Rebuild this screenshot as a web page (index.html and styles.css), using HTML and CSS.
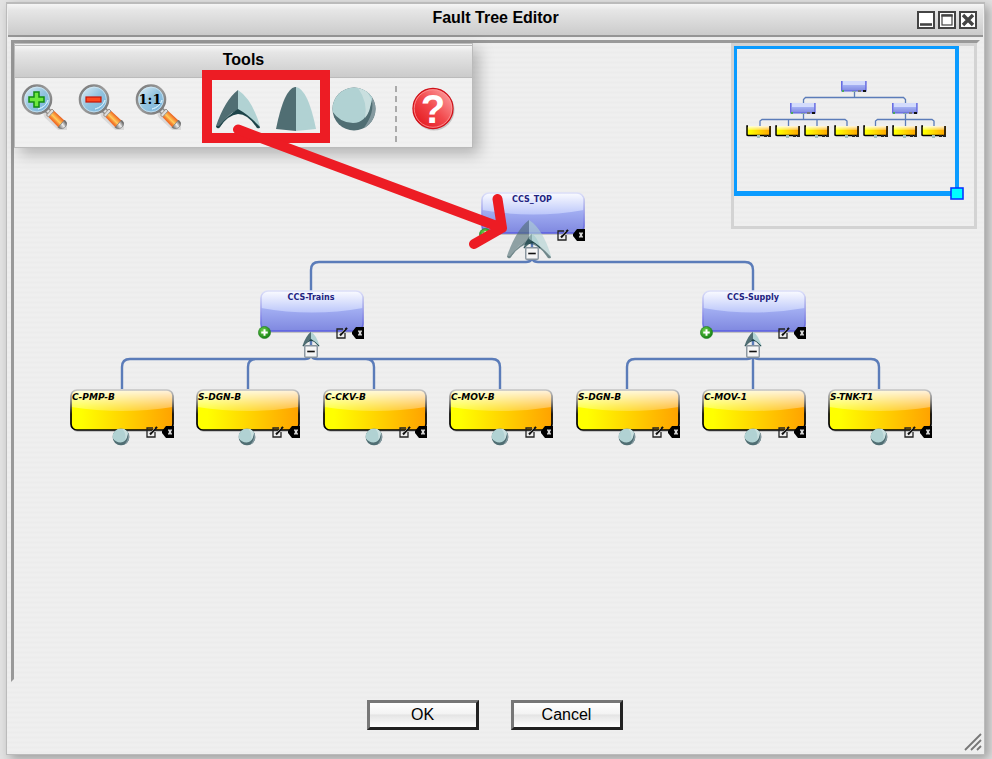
FILE: index.html
```html
<!DOCTYPE html>
<html lang="en">
<head>
<meta charset="utf-8">
<title>Fault Tree Editor</title>
<link rel="stylesheet" href="styles.css">
</head>
<body>
<svg class="defs" aria-hidden="true">
  <defs>
    <linearGradient id="blue" x1="0" y1="0" x2="0" y2="1"><stop offset="0" stop-color="#a6b2f4"/><stop offset=".45" stop-color="#a2aef2"/><stop offset="1" stop-color="#7f88e0"/></linearGradient>
    <linearGradient id="blueGloss" x1="0" y1="0" x2="0" y2="1"><stop offset="0" stop-color="#fafbff"/><stop offset="1" stop-color="#bcc7fa"/></linearGradient>
    <linearGradient id="blueEdge" x1="0" y1="0" x2="0" y2="1"><stop offset="0" stop-color="#dcdff8"/><stop offset="1" stop-color="#595de0"/></linearGradient>
    <linearGradient id="gold" x1="0" y1="0" x2="1" y2="0"><stop offset=".1" stop-color="#ffff00"/><stop offset="1" stop-color="#ffa200"/></linearGradient>
    <linearGradient id="goldGloss" x1="0" y1="0" x2="0" y2="1"><stop offset="0" stop-color="#fff" stop-opacity=".88"/><stop offset="1" stop-color="#fff" stop-opacity=".22"/></linearGradient>
    <linearGradient id="goldEdge" x1="0" y1="0" x2="0" y2="1"><stop offset="0" stop-color="#c4c4c4"/><stop offset=".25" stop-color="#888"/><stop offset=".6" stop-color="#000"/></linearGradient>
    <linearGradient id="lens" x1="0" y1="0" x2="1" y2="1"><stop offset="0" stop-color="#e5f2f9"/><stop offset=".5" stop-color="#92c3df"/><stop offset="1" stop-color="#74b1dc"/></linearGradient>
    <linearGradient id="rim" x1="0" y1="0" x2="1" y2="1"><stop offset="0" stop-color="#777"/><stop offset=".5" stop-color="#9d9d9d"/><stop offset="1" stop-color="#707070"/></linearGradient>
    <linearGradient id="grip" gradientUnits="userSpaceOnUse" x1="31" y1="37.500" x2="37.500" y2="31"><stop offset="0" stop-color="#ee5c1c"/><stop offset=".25" stop-color="#f4812e"/><stop offset=".5" stop-color="#ffcb5c"/><stop offset=".75" stop-color="#f9983c"/><stop offset="1" stop-color="#e9601f"/></linearGradient>
    <linearGradient id="metal" gradientUnits="userSpaceOnUse" x1="38" y1="43" x2="45" y2="38"><stop offset="0" stop-color="#777"/><stop offset=".5" stop-color="#eee"/><stop offset="1" stop-color="#555"/></linearGradient>
    <linearGradient id="help" x1="1" y1="0" x2="0" y2="1"><stop offset="0" stop-color="#ffb0b0"/><stop offset=".5" stop-color="#f24a4e"/><stop offset="1" stop-color="#e00b12"/></linearGradient>
    <radialGradient id="add" cx=".4" cy=".35" r=".7"><stop offset="0" stop-color="#6fd34f"/><stop offset="1" stop-color="#0d7a0d"/></radialGradient>
    <clipPath id="ballClip"><circle cx="22" cy="22" r="21.5"/></clipPath>

    <symbol id="box-blue" viewBox="0 0 104 43">
      <rect x="2" y="3" width="102" height="40" rx="6" fill="#aaa" opacity=".6"/>
      <rect x="1" y="1" width="102" height="40" rx="7" fill="url(#blue)"/>
      <path d="M1 8Q1 1 8 1H96Q103 1 103 8V18Q52 27 1 18Z" fill="url(#blueGloss)"/>
      <rect x="1" y="1" width="102" height="40" rx="7" fill="none" stroke="url(#blueEdge)" stroke-width="1.6"/>
    </symbol>
    <symbol id="box-gold" viewBox="0 0 104 43">
      <rect x="2" y="3" width="102" height="40" rx="6" fill="#999" opacity=".5"/>
      <rect x="1" y="1" width="102" height="40" rx="6" fill="url(#gold)"/>
      <path d="M1 7Q1 1 7 1H97Q103 1 103 7V18Q52 26 1 18Z" fill="url(#goldGloss)"/>
      <rect x="1" y="1" width="102" height="40" rx="6" fill="none" stroke="url(#goldEdge)" stroke-width="1.7"/>
    </symbol>
    <symbol id="magnifier" viewBox="0 0 46 46">
      <path d="M28 30L42 43" stroke="#666" stroke-width="11" opacity=".16" stroke-linecap="round"/>
      <path d="M25 25L30 30" stroke="#8c8c8c" stroke-width="6"/>
      <path d="M25 25L29 29" stroke="#ddd" stroke-width="3"/>
      <path d="M25.500 31L31 25L44 37L38 44Z" fill="url(#grip)"/>
      <path d="M25.500 31L31 25L33 27L27.500 33Z" fill="#ddd" stroke="#888" stroke-width=".8"/>
      <path d="M37 43.500L43.500 36Q47 38.500 45 42Q42 46.500 37 43.500Z" fill="url(#metal)" stroke="#777" stroke-width=".7"/>
      <circle cx="16" cy="15.500" r="14" fill="url(#lens)" stroke="url(#rim)" stroke-width="2.6"/>
      <circle cx="16" cy="15.500" r="12.4" fill="none" stroke="#d5e9f4" stroke-width=".7"/>
      <path d="M17 25Q25 23 27 16Q25 23 17 25Z" fill="#e8f6ff" stroke="#d3edf9"/>
    </symbol>
    <symbol id="gate-or" viewBox="0 0 46 42">
      <path d="M1 38Q10 12 23 2V22Q12 26 5 39Q3 42 1 38Z" fill="#506e73"/>
      <path d="M23 2Q37 11 45 38Q44 42 41 39Q34 27 23 22Z" fill="#b1d2d3"/>
      <path d="M23 21Q34 27 45 39Q45 41 42 40Q33 26 23 26Q13 27 5 39Q2 42 1 38L4 38Q13 27 23 21Z" fill="#1d4449"/>
    </symbol>
    <symbol id="gate-and" viewBox="0 0 42 46">
      <path d="M1 43Q9 3 20 1H21V45Z" fill="#506e73"/>
      <path d="M21 1Q33 3 41 43L21 45Z" fill="#b1d2d3"/>
    </symbol>
    <symbol id="ball" viewBox="-1 -1 46 46">
      <g clip-path="url(#ballClip)">
        <rect width="44" height="44" fill="#506e73"/>
        <path d="M39 10Q44 25 31 42H44V10Z" fill="#84999f"/>
        <path d="M0 24Q8 36 21 36T38 19Q41 12 40 9L30 0H0Z" fill="#b1d2d3"/>
        <path d="M26 1Q36 15 33 31Q39 24 39 12L35 4Z" fill="#c9dfdf"/>
      </g>
    </symbol>
    <symbol id="plus" viewBox="0 0 12 12">
      <circle cx="6" cy="6" r="5.6" fill="url(#add)" stroke="#238123" stroke-width=".6"/>
      <path d="M6 3V9M3 6H9" stroke="#fff" stroke-width="1.8"/>
    </symbol>
    <symbol id="edit" viewBox="0 0 12 12">
      <path d="M7 2H1V11H9V6" fill="none" stroke="#222" stroke-width="1.3"/>
      <path d="M4 8.500L11 .8" stroke="#111" stroke-width="2"/>
      <path d="M5 6L9 2" stroke="#ccc" stroke-width=".6"/>
    </symbol>
    <symbol id="remove" viewBox="0 0 12 12">
      <path d="M12 0V12H4L0 7V5L4 0Z" fill="#000"/>
      <path d="M6.500 3.500L9.500 8.500M9.500 3.500L6.500 8.500" stroke="#ddd" stroke-width="1.5"/>
    </symbol>
    <symbol id="minus" viewBox="0 0 13 12">
      <rect x=".7" y=".7" width="11.6" height="10.6" rx="1" fill="#f5f5f5" stroke="#87939d" stroke-width="1.3"/>
      <path d="M3 6H10" stroke="#111" stroke-width="1.5"/>
    </symbol>
    <symbol id="mini-blue" viewBox="0 0 26 13">
      <path d="M1 1H25V11H1Z" fill="url(#blue)"/>
      <path d="M2 1H24V5H2Z" fill="#d3dbfc"/>
      <path d="M.7 1V11H25V1" fill="none" stroke="#5a5ee0" stroke-width="1.2"/>
      <path d="M1 10H3V12H1Z" fill="#4ba95a"/><path d="M11 11H15V12H11Z" fill="#87aaa7"/><path d="M17 10H20V12H17Z" fill="#777"/><path d="M22 10H25V12H22Z" fill="#111"/>
    </symbol>
    <symbol id="mini-gold" viewBox="0 0 26 14">
      <path d="M1 1H25V11H1Z" fill="url(#gold)"/>
      <path d="M2 1H24V5H2Z" fill="url(#goldGloss)"/>
      <path d="M2 1H1V10L2 10.500H24V1" fill="none" stroke="#000" stroke-width="1.5"/>
      <path d="M11 10H14V13H11Z" fill="#9fbfbd"/><path d="M18 10H21V12H18ZM22 10H25V12H22Z" fill="#222"/>
    </symbol>
  </defs>
</svg>

<main class="window">
  <header class="titlebar">
    <h1 class="title">Fault Tree Editor</h1>
    <div class="window-buttons">
      <button class="wbtn" aria-label="Minimize"><svg viewBox="0 0 18 18"><rect x="1" y="1" width="16" height="16" fill="#fff" stroke="#444" stroke-width="2"/><path d="M3 13.500H15" stroke="#444" stroke-width="2.6"/></svg></button>
      <button class="wbtn" aria-label="Maximize"><svg viewBox="0 0 18 18"><rect x="1" y="1" width="16" height="16" fill="#fff" stroke="#444" stroke-width="2"/><rect x="4" y="4" width="10" height="10" fill="none" stroke="#444" stroke-width="1.2"/><path d="M3.400 4.500H14.600" stroke="#444" stroke-width="2.4"/></svg></button>
      <button class="wbtn" aria-label="Close"><svg viewBox="0 0 18 18"><rect x="1" y="1" width="16" height="16" fill="#fff" stroke="#444" stroke-width="2"/><path d="M4 4L14 14M14 4L4 14" stroke="#444" stroke-width="3.4"/></svg></button>
    </div>
  </header>

  <section class="canvas" aria-label="Fault tree">
    <svg class="layer" width="964" height="636" aria-hidden="true">
      <g transform="translate(-14 -43)" fill="none" stroke="#5b7cb9" stroke-width="2.4">
        <path d="M532 236V260M311 291V270Q311 262 319 262H526Q530 262 532 259Q534 262 538 262H745Q753 262 753 270V291"/>
        <path d="M311 334V356M122 389V367Q122 359 130 359H305Q309 359 311 356Q313 359 317 359H492Q500 359 500 367V389M248 389V367Q248 359 256 359M374 389V367Q374 359 366 359"/>
        <path d="M753 334V389M627 389V367Q627 359 635 359H747Q751 359 753 356Q755 359 759 359H871Q879 359 879 367V389"/>
      </g>
    </svg>

    <article class="node gate n-top">
      <svg class="box"><use href="#box-blue"/></svg><span class="label">CCS_TOP</span>
      <button class="badge add" aria-label="Add child"><svg><use href="#plus"/></svg></button>
      <svg class="gate-icon"><use href="#gate-or"/></svg>
      <svg class="gate-ghost"><use href="#gate-or"/></svg>
      <button class="badge collapse" aria-label="Collapse"><svg><use href="#minus"/></svg></button>
      <button class="badge edit" aria-label="Edit"><svg><use href="#edit"/></svg></button>
      <button class="badge remove" aria-label="Remove"><svg><use href="#remove"/></svg></button>
    </article>
    <article class="node gate n-trains">
      <svg class="box"><use href="#box-blue"/></svg><span class="label">CCS-Trains</span>
      <button class="badge add" aria-label="Add child"><svg><use href="#plus"/></svg></button>
      <svg class="gate-icon"><use href="#gate-or"/></svg>
      <button class="badge collapse" aria-label="Collapse"><svg><use href="#minus"/></svg></button>
      <button class="badge edit" aria-label="Edit"><svg><use href="#edit"/></svg></button>
      <button class="badge remove" aria-label="Remove"><svg><use href="#remove"/></svg></button>
    </article>
    <article class="node gate n-supply">
      <svg class="box"><use href="#box-blue"/></svg><span class="label">CCS-Supply</span>
      <button class="badge add" aria-label="Add child"><svg><use href="#plus"/></svg></button>
      <svg class="gate-icon"><use href="#gate-or"/></svg>
      <button class="badge collapse" aria-label="Collapse"><svg><use href="#minus"/></svg></button>
      <button class="badge edit" aria-label="Edit"><svg><use href="#edit"/></svg></button>
      <button class="badge remove" aria-label="Remove"><svg><use href="#remove"/></svg></button>
    </article>

    <article class="node leaf n-1"><svg class="box"><use href="#box-gold"/></svg><span class="label">C-PMP-B</span><svg class="event"><use href="#ball"/></svg><button class="badge edit" aria-label="Edit"><svg><use href="#edit"/></svg></button><button class="badge remove" aria-label="Remove"><svg><use href="#remove"/></svg></button></article>
    <article class="node leaf n-2"><svg class="box"><use href="#box-gold"/></svg><span class="label">S-DGN-B</span><svg class="event"><use href="#ball"/></svg><button class="badge edit" aria-label="Edit"><svg><use href="#edit"/></svg></button><button class="badge remove" aria-label="Remove"><svg><use href="#remove"/></svg></button></article>
    <article class="node leaf n-3"><svg class="box"><use href="#box-gold"/></svg><span class="label">C-CKV-B</span><svg class="event"><use href="#ball"/></svg><button class="badge edit" aria-label="Edit"><svg><use href="#edit"/></svg></button><button class="badge remove" aria-label="Remove"><svg><use href="#remove"/></svg></button></article>
    <article class="node leaf n-4"><svg class="box"><use href="#box-gold"/></svg><span class="label">C-MOV-B</span><svg class="event"><use href="#ball"/></svg><button class="badge edit" aria-label="Edit"><svg><use href="#edit"/></svg></button><button class="badge remove" aria-label="Remove"><svg><use href="#remove"/></svg></button></article>
    <article class="node leaf n-5"><svg class="box"><use href="#box-gold"/></svg><span class="label">S-DGN-B</span><svg class="event"><use href="#ball"/></svg><button class="badge edit" aria-label="Edit"><svg><use href="#edit"/></svg></button><button class="badge remove" aria-label="Remove"><svg><use href="#remove"/></svg></button></article>
    <article class="node leaf n-6"><svg class="box"><use href="#box-gold"/></svg><span class="label">C-MOV-1</span><svg class="event"><use href="#ball"/></svg><button class="badge edit" aria-label="Edit"><svg><use href="#edit"/></svg></button><button class="badge remove" aria-label="Remove"><svg><use href="#remove"/></svg></button></article>
    <article class="node leaf n-7"><svg class="box"><use href="#box-gold"/></svg><span class="label">S-TNK-T1</span><svg class="event"><use href="#ball"/></svg><button class="badge edit" aria-label="Edit"><svg><use href="#edit"/></svg></button><button class="badge remove" aria-label="Remove"><svg><use href="#remove"/></svg></button></article>

    <section class="tools">
      <h2 class="tools-title">Tools</h2>
      <div class="tools-row">
        <button class="tool zoom" aria-label="Zoom in"><svg viewBox="0 0 46 46"><use href="#magnifier"/><path d="M13 8H18V13H23V18H18V23H13V18H8V13H13Z" fill="#6de83e" stroke="#128a12" stroke-width="1.5"/></svg></button>
        <button class="tool zoom" aria-label="Zoom out"><svg viewBox="0 0 46 46"><use href="#magnifier"/><rect x="8" y="13" width="15" height="5" fill="#ff4a20" stroke="#c4160a" stroke-width="1.2"/></svg></button>
        <button class="tool zoom" aria-label="Actual size"><svg viewBox="0 0 46 46"><use href="#magnifier"/><text x="15" y="20" class="ratio">1:1</text></svg></button>
        <button class="tool gate-tool first-gate" aria-label="OR gate"><svg><use href="#gate-or"/></svg></button>
        <button class="tool gate-tool" aria-label="AND gate"><svg><use href="#gate-and"/></svg></button>
        <button class="tool gate-tool" aria-label="Basic event"><svg><use href="#ball"/></svg></button>
        <span class="divider"></span>
        <button class="tool help" aria-label="Help"><svg viewBox="0 0 46 46"><circle cx="24" cy="24" r="20.500" fill="#888" opacity=".4"/><circle cx="23" cy="22.500" r="20" fill="url(#help)" stroke="#cf1119" stroke-width="1.3"/><circle cx="23" cy="22.500" r="18.800" fill="none" stroke="#ff9a9a" stroke-width=".8"/><text x="23" y="37" class="question">?</text></svg></button>
      </div>
    </section>

    <aside class="overview" aria-label="Overview">
      <svg width="246" height="186" viewBox="731 43 246 186">
        <g fill="none" stroke="#5b7cb9" stroke-width="1.3">
          <path d="M854.500 92V97.500M803.500 103V99.500L805.500 97.500H903.500L905.500 99.500V103"/>
          <path d="M803.500 114V119.500M760 126V121L762 119.500H845L847 121V126M788.500 126V120M817 126V120"/>
          <path d="M905.500 114V126M875.500 126V121L877.500 119.500H932L934 121V126"/>
        </g>
        <use href="#mini-blue" x="841" y="80" width="26" height="13"/>
        <use href="#mini-blue" x="790" y="102" width="26" height="13"/>
        <use href="#mini-blue" x="892" y="102" width="26" height="13"/>
        <use href="#mini-gold" x="746" y="125" width="26" height="14"/>
        <use href="#mini-gold" x="775" y="125" width="26" height="14"/>
        <use href="#mini-gold" x="804" y="125" width="26" height="14"/>
        <use href="#mini-gold" x="834" y="125" width="26" height="14"/>
        <use href="#mini-gold" x="863" y="125" width="26" height="14"/>
        <use href="#mini-gold" x="892" y="125" width="26" height="14"/>
        <use href="#mini-gold" x="921" y="125" width="26" height="14"/>
        <path d="M734 46H959V196H734ZM737 49V191H955V49Z" fill="#0a9bff" fill-rule="evenodd"/>
        <rect x="951" y="188" width="12" height="11" fill="#00ffff" stroke="#0838ff" stroke-width="1.6"/>
      </svg>
    </aside>

    <svg class="layer" width="964" height="636" aria-hidden="true">
      <g transform="translate(-14 -43)" fill="none" stroke="#ed1c24" stroke-width="10">
        <rect x="207" y="75" width="118" height="63"/>
        <path d="M238 129.500L502 228M497.500 199L502 228L474 244" stroke-linecap="round" stroke-linejoin="round"/>
      </g>
    </svg>
  </section>

  <footer class="actions">
    <button class="action">OK</button>
    <button class="action">Cancel</button>
  </footer>
  <svg class="resize" viewBox="0 0 18 18" aria-hidden="true"><path d="M1 17L17 1M7 17L17 7M13 17L17 13" stroke="#777" stroke-width="1.8"/></svg>
</main>
</body>
</html>
```

FILE: styles.css
```css
* { box-sizing: border-box; }

body {
  margin: 0;
  min-height: 100vh;
  display: flex;
  padding: 2px 7px 4px 6px;
  background: #e2e2e2;
  font-family: "Liberation Sans", Arial, sans-serif;
  font-size: 16px;
  color: #000;
}

svg { display: block; }

button {
  margin: 0;
  padding: 0;
  border: 0;
  background: none;
  font: inherit;
  color: inherit;
}

button > svg { width: 100%; height: 100%; overflow: visible; }

.defs { position: absolute; width: 0; height: 0; }

.window {
  position: relative;
  flex: 1;
  display: flex;
  flex-direction: column;
  border: 1px solid #bbb;
  border-top-width: 2px;
  padding: 0 1px;
  background: repeating-linear-gradient(#efefef 0, #efefef 2px, #ececec 3px, #ececec 4px, #efefef 5px);
  box-shadow: 4px 4px 10px rgba(0, 0, 0, .3);
}

.titlebar {
  position: relative;
  height: 33px;
  display: flex;
  justify-content: center;
  border-bottom: 2px solid #959595;
  background: linear-gradient(#f6f6f6, #e6e6e6 20%, #cbcbcb);
}

.title {
  margin: 0;
  padding-top: 4px;
  font-size: 16px;
  line-height: 20px;
}

.window-buttons {
  position: absolute;
  top: 7px;
  right: 6px;
  display: flex;
  gap: 3px;
}

.wbtn { width: 18px; height: 18px; }

.canvas {
  position: relative;
  flex: 1;
  margin: 3px 3px 0;
  border: 3px solid #999;
  border-right-color: transparent;
  border-bottom-color: transparent;
}

.layer {
  position: absolute;
  top: 0;
  left: 0;
  pointer-events: none;
}

/* Tree nodes */
.node {
  position: absolute;
  width: 104px;
  height: 43px;
  font-family: "DejaVu Sans", Verdana, sans-serif;
  font-weight: bold;
  line-height: 12px;
}

.box {
  position: absolute;
  width: 104px;
  height: 43px;
}

.label {
  position: relative;
  display: block;
  padding: 2px;
}

.gate .label {
  font-size: 8px;
  padding-right: 4px;
  text-align: center;
  color: #222280;
}

.leaf .label { font-size: 9px; font-style: italic; }

.n-top { left: 467px; top: 149px; }
.n-trains { left: 246px; top: 247px; }
.n-supply { left: 688px; top: 247px; }
.leaf { top: 346px; }
.n-1 { left: 56px; }
.n-2 { left: 182px; }
.n-3 { left: 309px; }
.n-4 { left: 435px; }
.n-5 { left: 562px; }
.n-6 { left: 688px; }
.n-7 { left: 814px; }

.badge { position: absolute; width: 12px; height: 12px; }
.add { left: -2px; top: 36px; width: 13px; height: 13px; }
.edit { left: 76px; top: 37px; }
.remove { left: 92px; top: 37px; }
.collapse { left: 44px; top: 55px; width: 14px; height: 13px; }

.gate-icon {
  position: absolute;
  left: 42px;
  top: 41px;
  width: 18px;
  height: 16px;
}

.gate-ghost {
  position: absolute;
  left: 25px;
  top: 26px;
  width: 46px;
  height: 42px;
  opacity: .6;
}

.event {
  position: absolute;
  left: 42px;
  top: 39px;
  width: 18px;
  height: 18px;
}

/* Tool palette */
.tools {
  position: absolute;
  left: 0;
  top: 0;
  width: 459px;
  border: 1px solid #bbb;
  padding-top: 1px;
  background: repeating-linear-gradient(#f1f1f1 0, #f1f1f1 2px, #eee 3px, #eee 4px, #f1f1f1 5px);
  box-shadow: 6px 6px 14px rgba(0, 0, 0, .25);
}

.tools-title {
  margin: 0;
  height: 33px;
  border: 1px solid #bbb;
  border-width: 1px 0;
  background: linear-gradient(#f6f6f6, #e6e6e6 20%, #cbcbcb);
  font-size: 16px;
  line-height: 28px;
  text-align: center;
}

.tools-row {
  display: flex;
  align-items: center;
  height: 69px;
  padding: 0 0 8px 6px;
}

.tool { width: 46px; height: 46px; }
.zoom { margin: 0 11px 4px 0; }
.gate-tool { margin-right: 12px; }
.first-gate { margin-left: 23px; }

.divider {
  align-self: flex-start;
  margin: 8px 13px 0 6px;
  height: 56px;
  border-left: 2px dashed #aaa;
}

.ratio {
  font: bold 13px "DejaVu Serif", serif;
  text-anchor: middle;
}

.question {
  font: bold 40px "Liberation Sans", Arial, sans-serif;
  text-anchor: middle;
  fill: #fff;
}

.overview {
  position: absolute;
  right: 0;
  top: 0;
  width: 246px;
  height: 186px;
  outline: 3px solid #d3d3d3;
  outline-offset: -3px;
}

/* Footer */
.actions {
  display: flex;
  justify-content: center;
  gap: 32px;
  padding: 18px 2px 24px 0;
}

.action {
  width: 112px;
  height: 30px;
  border: 3px solid;
  border-color: #777 #222 #222 #777;
  background: linear-gradient(#fff, #f3f3f3 45%, #e4e4e4 50%, #fff);
}

.resize {
  position: absolute;
  right: 2px;
  bottom: 3px;
  width: 18px;
  height: 18px;
}
```
